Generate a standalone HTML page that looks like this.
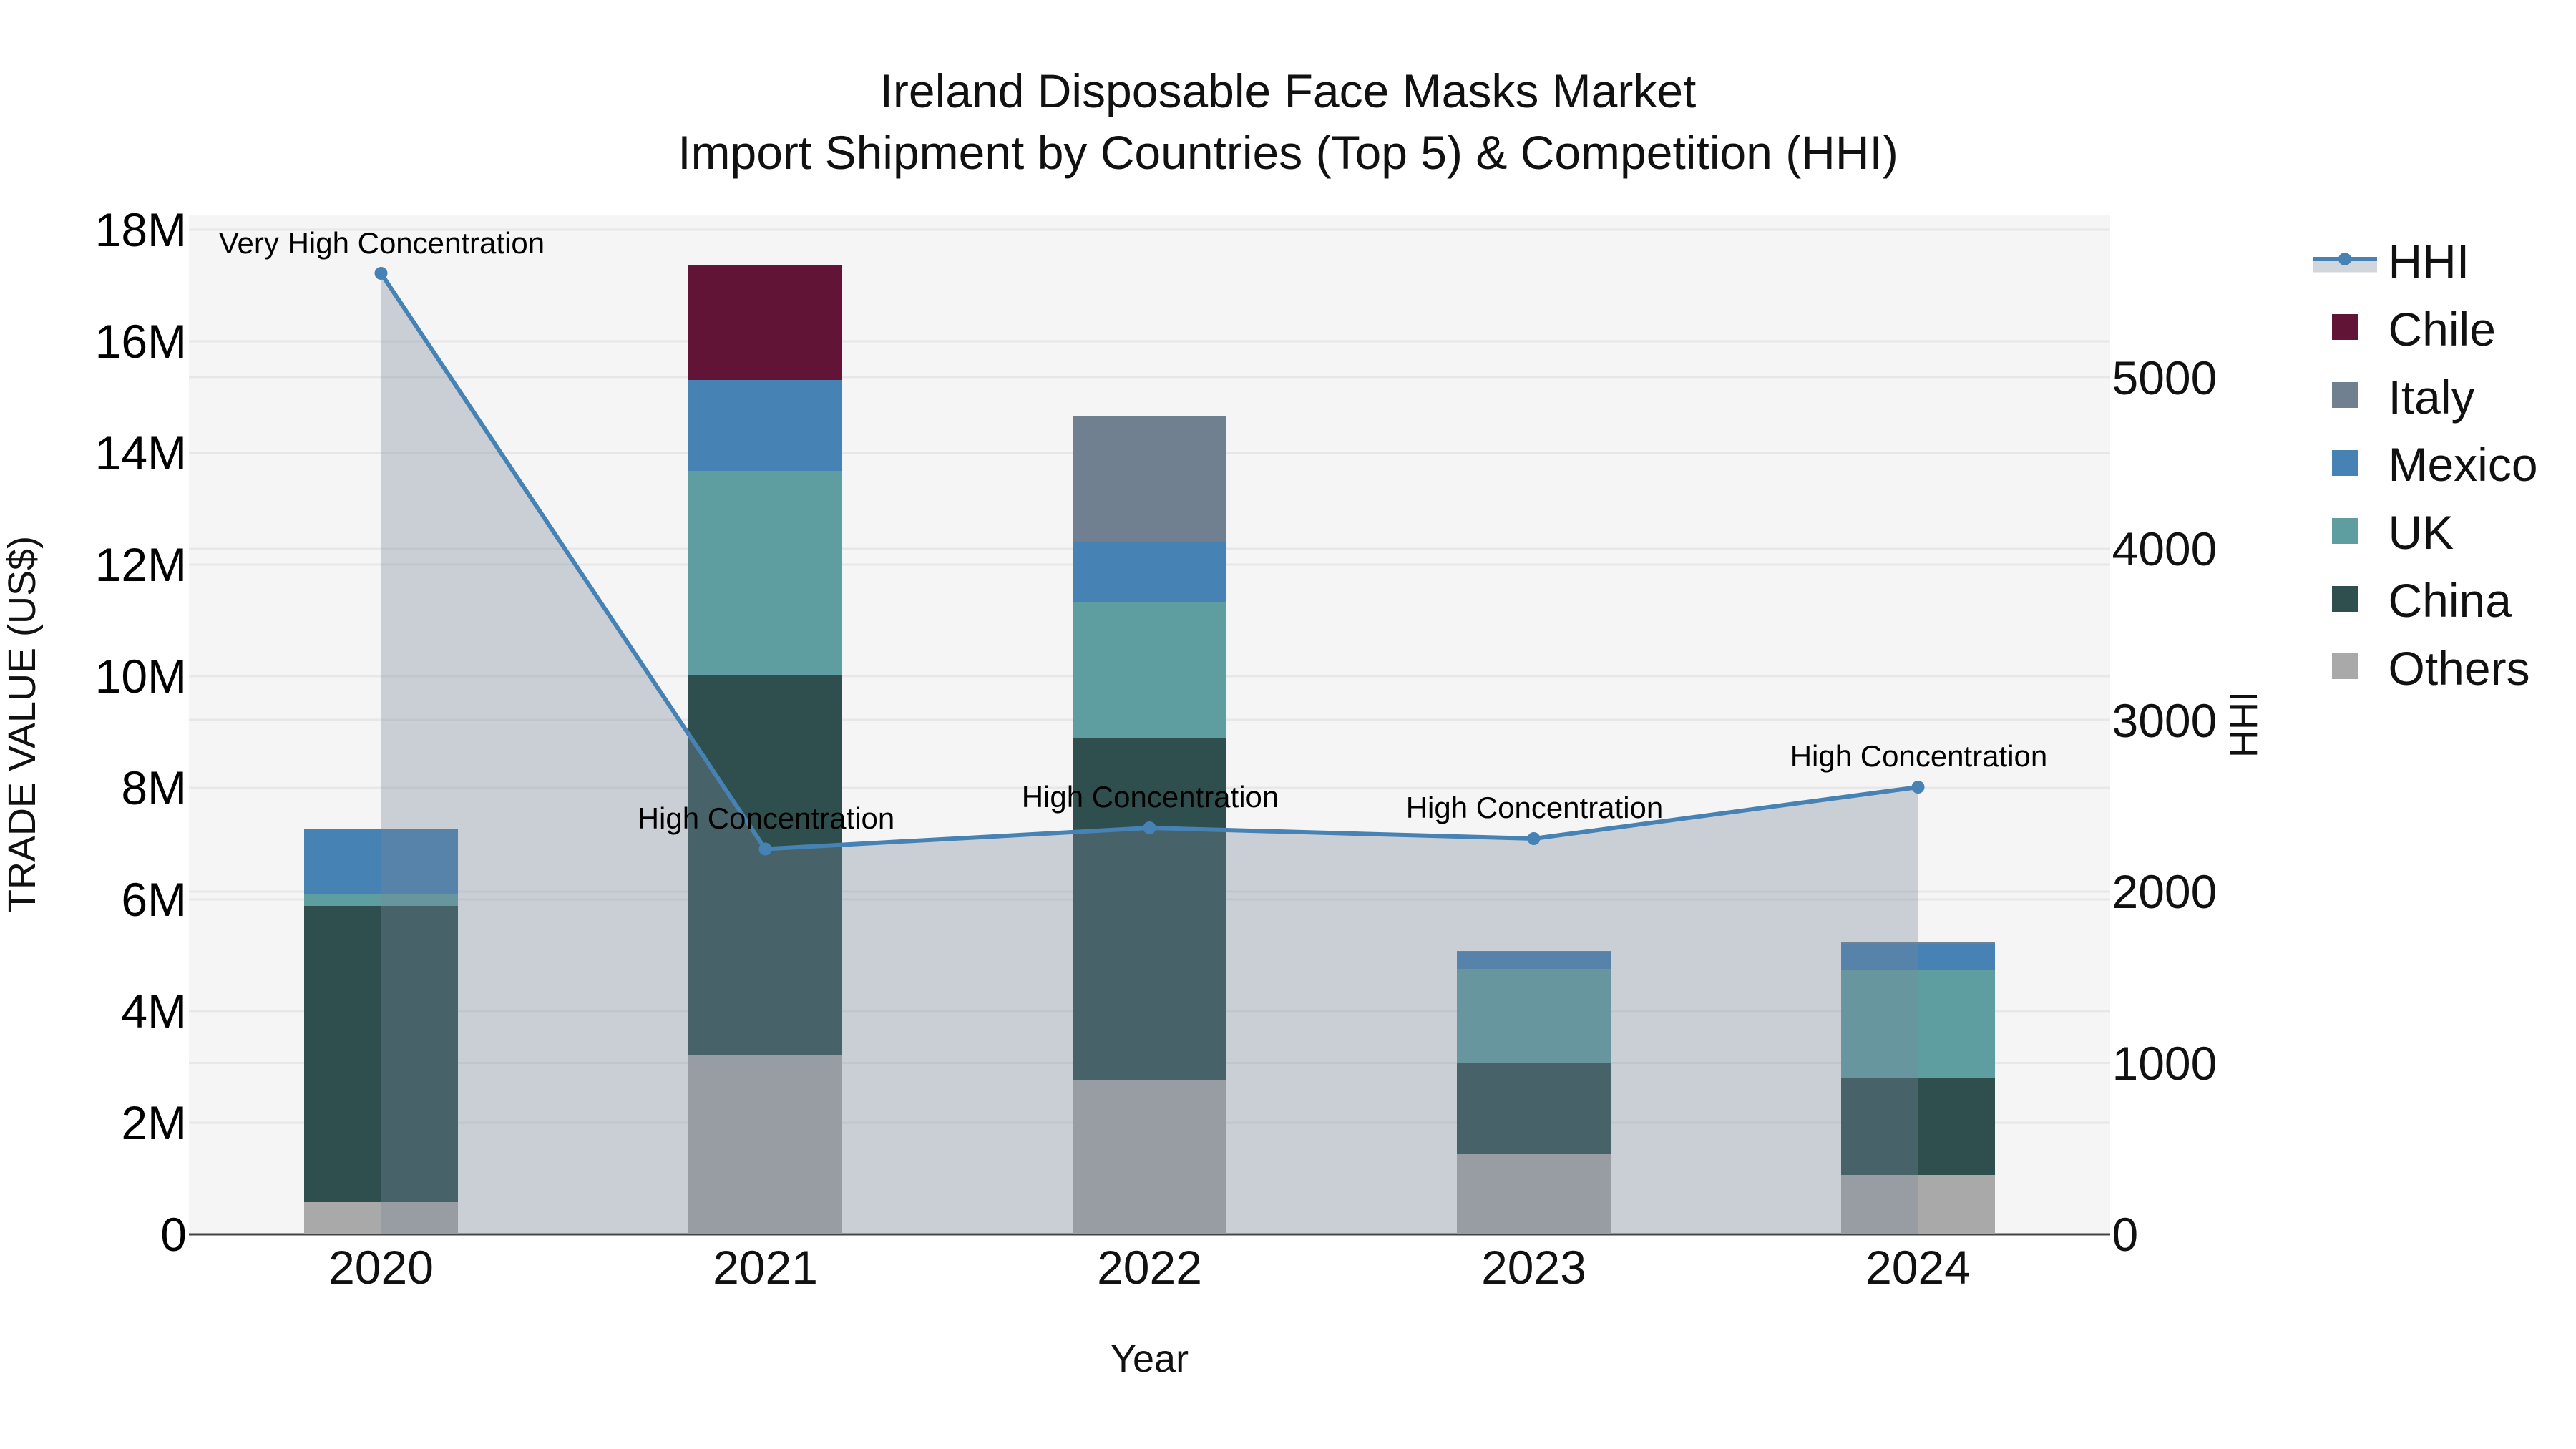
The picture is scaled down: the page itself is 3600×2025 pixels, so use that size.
<!DOCTYPE html>
<html lang="en">
<head>
<meta charset="utf-8">
<title>Ireland Disposable Face Masks Market</title>
<style>
html,body{margin:0;padding:0;background:#fff;width:3600px;height:2025px;overflow:hidden}
svg{display:block}
text{font-family:"Liberation Sans",Arial,sans-serif;white-space:pre}
.t{font-size:66px;fill:#111}
.l{font-size:66px;fill:#000;text-anchor:end}
.r{font-size:66px;fill:#111}
.x{font-size:66px;fill:#111;text-anchor:middle}
.a{font-size:42px;fill:#000;text-anchor:middle}
.g{stroke:#e7e7e7;stroke-width:3}
</style>
</head>
<body>
<svg width="3600" height="2025" viewBox="0 0 3600 2025" xmlns="http://www.w3.org/2000/svg">
<rect width="3600" height="2025" fill="#fff"/>
<rect x="264" y="300" width="2685" height="1425" fill="#f5f5f5"/>

<!-- primary grid -->
<g class="g">
<line x1="264" x2="2949" y1="321" y2="321"/>
<line x1="264" x2="2949" y1="477" y2="477"/>
<line x1="264" x2="2949" y1="633" y2="633"/>
<line x1="264" x2="2949" y1="789" y2="789"/>
<line x1="264" x2="2949" y1="945" y2="945"/>
<line x1="264" x2="2949" y1="1101" y2="1101"/>
<line x1="264" x2="2949" y1="1257" y2="1257"/>
<line x1="264" x2="2949" y1="1413" y2="1413"/>
<line x1="264" x2="2949" y1="1569" y2="1569"/>
<!-- secondary grid -->
<line x1="264" x2="2949" y1="527" y2="527"/>
<line x1="264" x2="2949" y1="767" y2="767"/>
<line x1="264" x2="2949" y1="1006" y2="1006"/>
<line x1="264" x2="2949" y1="1246" y2="1246"/>
<line x1="264" x2="2949" y1="1485.5" y2="1485.5"/>
</g>

<!-- zero line -->
<line x1="264" x2="2949" y1="1725" y2="1725" stroke="#444" stroke-width="3"/>

<!-- bars -->
<g shape-rendering="crispEdges">
<!-- 2020 -->
<rect x="425" y="1680" width="215" height="45" fill="#a9a9a9"/>
<rect x="425" y="1266" width="215" height="414" fill="#2f4f4f"/>
<rect x="425" y="1249" width="215" height="17" fill="#5f9ea0"/>
<rect x="425" y="1159" width="215" height="90" fill="#4682b4"/>
<rect x="425" y="1158" width="215" height="1" fill="#708090"/>
<!-- 2021 -->
<rect x="962" y="1475" width="215" height="250" fill="#a9a9a9"/>
<rect x="962" y="944" width="215" height="531" fill="#2f4f4f"/>
<rect x="962" y="658" width="215" height="286" fill="#5f9ea0"/>
<rect x="962" y="531" width="215" height="127" fill="#4682b4"/>
<rect x="962" y="371" width="215" height="160" fill="#611436"/>
<!-- 2022 -->
<rect x="1499" y="1510" width="215" height="215" fill="#a9a9a9"/>
<rect x="1499" y="1032" width="215" height="478" fill="#2f4f4f"/>
<rect x="1499" y="841" width="215" height="191" fill="#5f9ea0"/>
<rect x="1499" y="758" width="215" height="83" fill="#4682b4"/>
<rect x="1499" y="581" width="215" height="177" fill="#708090"/>
<!-- 2023 -->
<rect x="2036" y="1613" width="215" height="112" fill="#a9a9a9"/>
<rect x="2036" y="1486" width="215" height="127" fill="#2f4f4f"/>
<rect x="2036" y="1354" width="215" height="132" fill="#5f9ea0"/>
<rect x="2036" y="1331" width="215" height="23" fill="#4682b4"/>
<rect x="2036" y="1329" width="215" height="2" fill="#708090"/>
<!-- 2024 -->
<rect x="2573" y="1642" width="215" height="83" fill="#a9a9a9"/>
<rect x="2573" y="1507" width="215" height="135" fill="#2f4f4f"/>
<rect x="2573" y="1355" width="215" height="152" fill="#5f9ea0"/>
<rect x="2573" y="1319" width="215" height="36" fill="#4682b4"/>
<rect x="2573" y="1316" width="215" height="3" fill="#708090"/>
</g>

<!-- HHI area, line, markers -->
<polygon points="532.5,382 1069.5,1186.5 1606.5,1157 2143.5,1172 2680.5,1100 2680.5,1725 532.5,1725" fill="rgba(119,136,155,0.34)"/>
<polyline points="532.5,382 1069.5,1186.5 1606.5,1157 2143.5,1172 2680.5,1100" fill="none" stroke="#4682b4" stroke-width="6" stroke-linejoin="round"/>
<g fill="#4682b4">
<circle cx="532.5" cy="382" r="9"/>
<circle cx="1069.5" cy="1186.5" r="9"/>
<circle cx="1606.5" cy="1157" r="9"/>
<circle cx="2143.5" cy="1172" r="9"/>
<circle cx="2680.5" cy="1100" r="9"/>
</g>

<!-- annotations -->
<text class="a" x="533.5" y="354">Very High Concentration</text>
<text class="a" x="1070.5" y="1158">High Concentration</text>
<text class="a" x="1607.5" y="1128">High Concentration</text>
<text class="a" x="2144.5" y="1143">High Concentration</text>
<text class="a" x="2681.5" y="1071">High Concentration</text>

<!-- title -->
<text class="t" x="1800" y="150" text-anchor="middle">Ireland Disposable Face Masks Market</text>
<text class="t" x="1800" y="236" text-anchor="middle">Import Shipment by Countries (Top 5) &amp; Competition (HHI)</text>

<!-- left ticks -->
<text class="l" x="261" y="344">18M</text>
<text class="l" x="261" y="500">16M</text>
<text class="l" x="261" y="656">14M</text>
<text class="l" x="261" y="812">12M</text>
<text class="l" x="261" y="968">10M</text>
<text class="l" x="261" y="1124">8M</text>
<text class="l" x="261" y="1280">6M</text>
<text class="l" x="261" y="1436">4M</text>
<text class="l" x="261" y="1592">2M</text>
<text class="l" x="261" y="1748">0</text>

<!-- right ticks -->
<text class="r" x="2951.5" y="551">5000</text>
<text class="r" x="2951.5" y="790">4000</text>
<text class="r" x="2951.5" y="1030">3000</text>
<text class="r" x="2951.5" y="1269">2000</text>
<text class="r" x="2951.5" y="1509">1000</text>
<text class="r" x="2951.5" y="1748">0</text>

<!-- x ticks -->
<text class="x" x="532.5" y="1794">2020</text>
<text class="x" x="1069.5" y="1794">2021</text>
<text class="x" x="1606.5" y="1794">2022</text>
<text class="x" x="2143.5" y="1794">2023</text>
<text class="x" x="2680.5" y="1794">2024</text>

<!-- axis titles -->
<text x="1606.5" y="1917" font-size="54" fill="#111" text-anchor="middle">Year</text>
<text transform="translate(49,1012.5) rotate(-90)" font-size="54" fill="#111" text-anchor="middle">TRADE VALUE (US$)</text>
<text transform="translate(3154,1012.5) rotate(-90)" font-size="54" fill="#111" text-anchor="middle">HHI</text>

<!-- legend -->
<rect x="3232" y="362" width="90" height="18.5" fill="rgba(119,136,155,0.34)"/>
<line x1="3232" x2="3322" y1="362" y2="362" stroke="#4682b4" stroke-width="6"/>
<circle cx="3277" cy="362" r="9" fill="#4682b4"/>
<g shape-rendering="crispEdges">
<rect x="3259" y="439" width="36" height="36" fill="#611436"/>
<rect x="3259" y="534" width="36" height="36" fill="#708090"/>
<rect x="3259" y="629" width="36" height="36" fill="#4682b4"/>
<rect x="3259" y="724" width="36" height="36" fill="#5f9ea0"/>
<rect x="3259" y="819" width="36" height="36" fill="#2f4f4f"/>
<rect x="3259" y="913" width="36" height="36" fill="#a9a9a9"/>
</g>
<text class="r" x="3337.5" y="388">HHI</text>
<text class="r" x="3337.5" y="483">Chile</text>
<text class="r" x="3337.5" y="578">Italy</text>
<text class="r" x="3337.5" y="672">Mexico</text>
<text class="r" x="3337.5" y="767">UK</text>
<text class="r" x="3337.5" y="862">China</text>
<text class="r" x="3337.5" y="957">Others</text>
</svg>
</body>
</html>
